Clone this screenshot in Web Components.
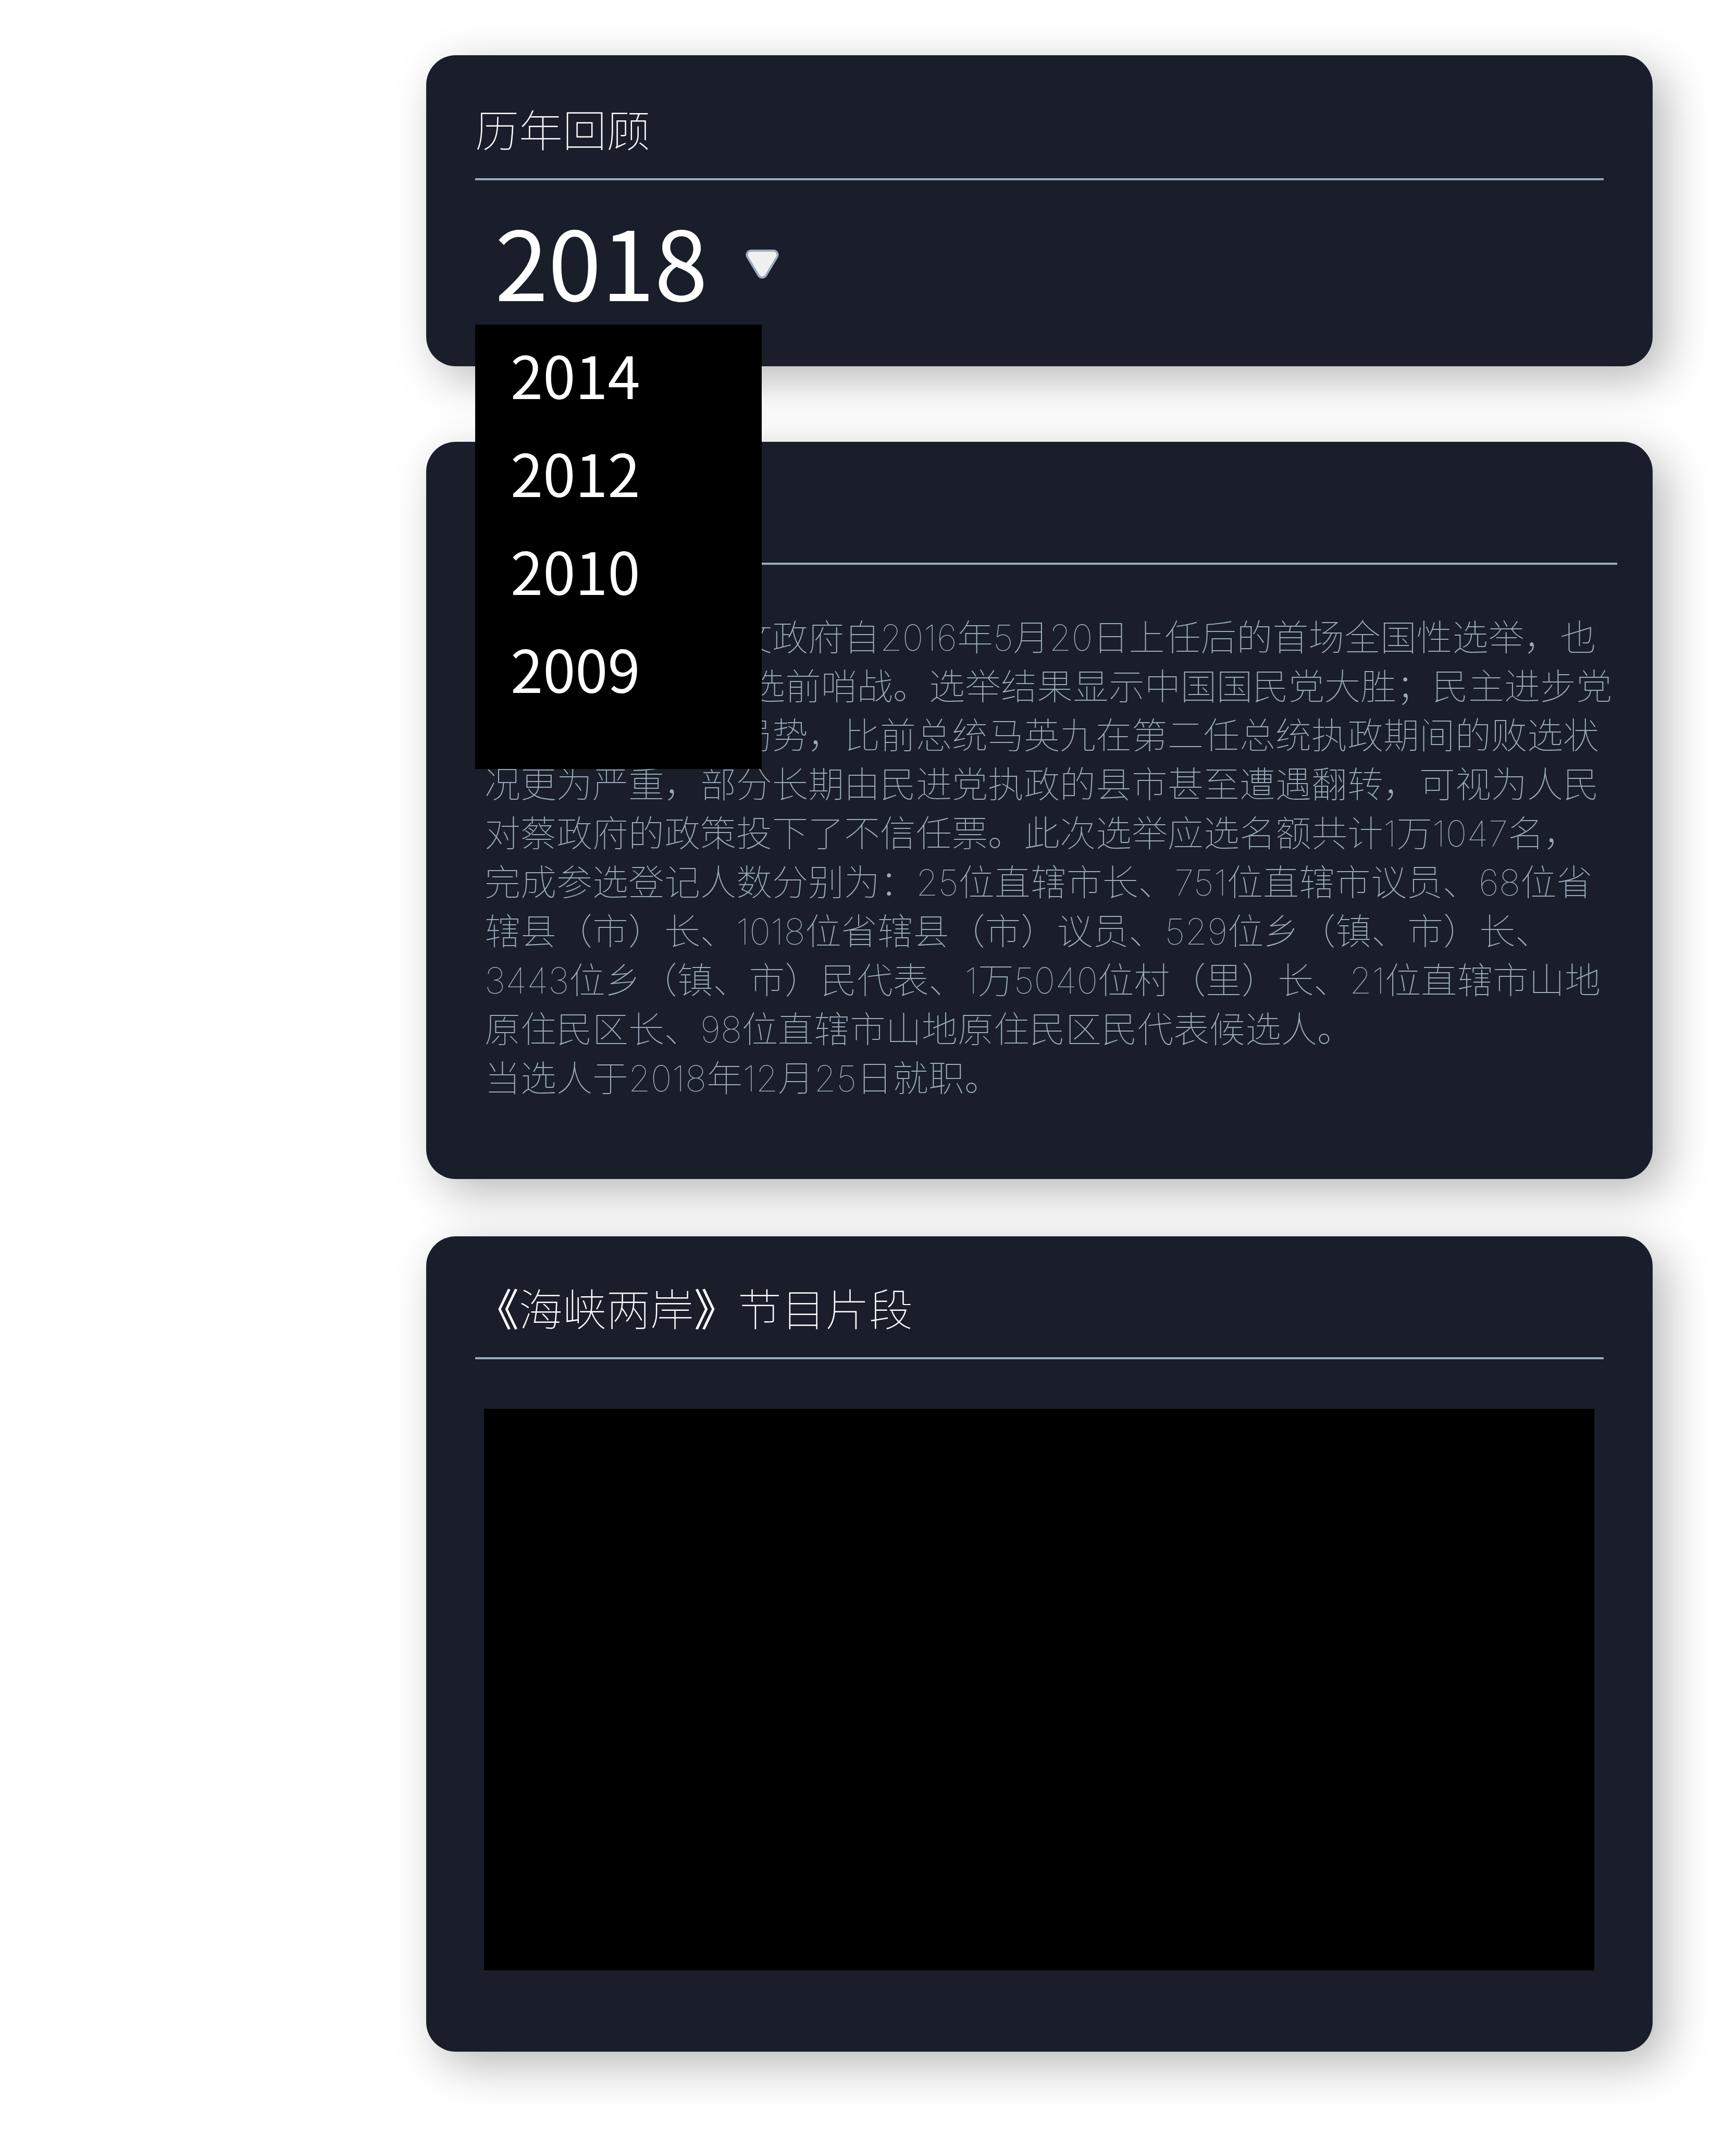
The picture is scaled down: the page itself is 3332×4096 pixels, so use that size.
<!DOCTYPE html>
<html lang="zh-CN">
<head>
<meta charset="utf-8">
<title>历年回顾</title>
<style>
  body {
    margin: 0;
    background: #fff;
    font-family: "Noto Sans CJK SC", sans-serif;
    --panel: #191e2a;
    --line: #9aabbc;
    --ink: #fff;
  }
  b { font-weight: 400; }
</style>
</head>
<body>
<review-page>
  <review-card class="years">
    <span slot="title">历年回顾</span>
    <year-picker></year-picker>
  </review-card>
  <review-card class="summary">
    <review-article></review-article>
  </review-card>
  <review-card class="clip">
    <span slot="title"><b>《</b>海峡两岸<b>》</b>节目片段</span>
    <clip-player></clip-player>
  </review-card>
</review-page>

<script>
class ReviewPage extends HTMLElement {
  constructor() {
    super();
    this.attachShadow({ mode: "open" }).innerHTML = `
      <style>
        :host { display: block; }
        main { display: flex; flex-direction: column; padding: 106px 160px 158px 818px; }
        ::slotted(.years) { --head-top: 80px; position: relative; z-index: 1; }
        ::slotted(.summary) { --rule-end: 68px; margin-top: 145px; }
        ::slotted(.clip) { margin-top: 110px; }
      </style>
      <main><slot></slot></main>`;
  }
}

class ReviewCard extends HTMLElement {
  constructor() {
    super();
    this.attachShadow({ mode: "open" }).innerHTML = `
      <style>
        :host {
          display: block;
          background: var(--panel);
          border-radius: 57px;
          box-shadow: 25px 25px 88px rgba(0, 0, 0, .286);
        }
        h2 {
          min-height: 120px;
          margin: 0 var(--rule-end, 94px) 0 94px;
          padding: var(--head-top, 76px) 0 36px;
          border-bottom: 4px solid var(--line);
          color: var(--ink);
          font-size: 84px;
          line-height: 120px;
          font-weight: 100;
        }
      </style>
      <section>
        <h2><slot name="title"></slot></h2>
        <slot></slot>
      </section>`;
  }
}

class YearPicker extends HTMLElement {
  constructor() {
    super();
    const years = ["2014", "2012", "2010", "2009"];
    this.attachShadow({ mode: "open" }).innerHTML = `
      <style>
        :host { display: block; position: relative; padding: 44px 94px 80px; color: var(--ink); }
        .row { display: flex; align-items: center; gap: 72px; height: 233px; padding-left: 38px; }
        select {
          appearance: none;
          margin: 0;
          padding: 0 0 18px;
          border: 0;
          background: none;
          color: inherit;
          font: 400 184px/200px "Noto Sans CJK SC", sans-serif;
        }
        svg { display: block; width: 64px; height: 56px; }
        ul {
          position: absolute;
          top: 277px;
          left: 94px;
          box-sizing: border-box;
          width: 550px;
          margin: 0;
          padding: 0 0 101px;
          background: #000;
          list-style: none;
        }
        button {
          display: block;
          width: 100%;
          height: 188px;
          padding: 0 0 0 68px;
          border: 0;
          background: none;
          color: inherit;
          font: 400 112px/188px "Noto Sans CJK SC", sans-serif;
          text-align: left;
        }
      </style>
      <label class="row">
        <select><option>2018</option></select>
        <svg viewBox="0 0 64 56" aria-hidden="true">
          <path d="M11 2H53C60 2 64 9 60 15L39 50C35 55 29 55 25 50L4 15C0 9 4 2 11 2Z" fill="#f0f0f0" stroke="#9aabbc" stroke-width="4"/>
        </svg>
      </label>
      <ul>${years.map(y => `<li><button type="button">${y}</button></li>`).join("")}</ul>`;
  }
}

class ReviewArticle extends HTMLElement {
  constructor() {
    super();
    this.attachShadow({ mode: "open" }).innerHTML = `
      <style>
        :host { display: block; padding: 93px 0 146px 112px; }
        p {
          margin: 0;
          color: var(--line);
          font: 100 69px/94px Inter, "Noto Sans CJK SC", sans-serif;
          white-space: nowrap;
        }
        /* the open year menu lies over the start of the first lines */
        .lead { padding-left: 483px; }
        .lead.wide { padding-left: 508px; }
      </style>
      <p><span class="lead">文政府自2016年5月20日上任后的首场全国性选举，也</span><br><span class="lead wide">选前哨战。选举结果显示中国国民党大胜；民主进步党</span><br><span class="lead">局势，比前总统马英九在第二任总统执政期间的败选状</span><br>况更为严重，部分长期由民进党执政的县市甚至遭遇翻转，可视为人民<br>对蔡政府的政策投下了不信任票。此次选举应选名额共计1万1047名，<br>完成参选登记人数分别为：25位直辖市长、751位直辖市议员、68位省<br>辖县（市）长、1018位省辖县（市）议员、529位乡（镇、市）长、<br>3443位乡（镇、市）民代表、1万5040位村（里）长、21位直辖市山地<br>原住民区长、98位直辖市山地原住民区民代表候选人。</p>
      <p>当选人于2018年12月25日就职。</p>`;
  }
}

class ClipPlayer extends HTMLElement {
  constructor() {
    super();
    this.attachShadow({ mode: "open" }).innerHTML = `
      <style>
        :host { display: block; padding: 95px 112px 156px 111px; }
        video { display: block; width: 100%; aspect-ratio: 2131 / 1078; background: #000; }
      </style>
      <video></video>`;
  }
}

customElements.define("review-page", ReviewPage);
customElements.define("review-card", ReviewCard);
customElements.define("year-picker", YearPicker);
customElements.define("review-article", ReviewArticle);
customElements.define("clip-player", ClipPlayer);
</script>
</body>
</html>
